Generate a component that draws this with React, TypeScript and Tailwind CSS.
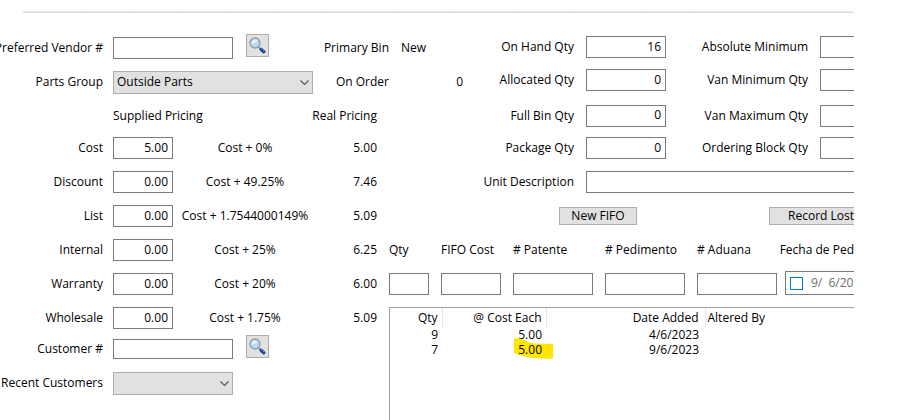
import type { ReactNode } from "react";

// ============================================================
// Data
// ============================================================

const pricing = [
  { id: "cost", label: "Cost", supplied: "5.00", formula: "Cost + 0%", real: "5.00" },
  { id: "discount", label: "Discount", supplied: "0.00", formula: "Cost + 49.25%", real: "7.46" },
  { id: "list", label: "List", supplied: "0.00", formula: "Cost + 1.7544000149%", real: "5.09" },
  { id: "internal", label: "Internal", supplied: "0.00", formula: "Cost + 25%", real: "6.25" },
  { id: "warranty", label: "Warranty", supplied: "0.00", formula: "Cost + 20%", real: "6.00" },
  { id: "wholesale", label: "Wholesale", supplied: "0.00", formula: "Cost + 1.75%", real: "5.09" },
];

const quantities = [
  { id: "on-hand", label: "On Hand Qty", value: "16", limitId: "abs-min", limit: "Absolute Minimum", row: "h-8" },
  { id: "allocated", label: "Allocated Qty", value: "0", limitId: "van-min", limit: "Van Minimum Qty", row: "h-[34px]" },
  { id: "full-bin", label: "Full Bin Qty", value: "0", limitId: "van-max", limit: "Van Maximum Qty", row: "h-9 pt-px" },
  { id: "package", label: "Package Qty", value: "0", limitId: "block", limit: "Ordering Block Qty", row: "h-[30px]" },
];

const fifoFields = [
  { id: "fifo-qty", label: "Qty", width: "w-10" },
  { id: "fifo-cost", label: "FIFO Cost", width: "w-[60px]" },
  { id: "patente", label: "# Patente", width: "w-20" },
  { id: "pedimento", label: "# Pedimento", width: "w-20" },
  { id: "aduana", label: "# Aduana", width: "w-20" },
];

const layers = [
  { qty: "9", cost: "5.00", date: "4/6/2023", marked: false },
  { qty: "7", cost: "5.00", date: "9/6/2023", marked: true },
];

const field = "h-[22px] border border-[#7a7a7a] bg-white pb-0.5 outline-none";

// ============================================================
// Small pieces
// ============================================================

function Label({ htmlFor, children }: { htmlFor?: string; children: ReactNode }) {
  return (
    <div className="flex w-[103px] shrink-0 justify-end">
      <label htmlFor={htmlFor}>{children}</label>
    </div>
  );
}

function LookupButton({ label }: { label: string }) {
  return (
    <div className="flex h-full items-center pb-[5px] pl-[3px]">
      <button
        type="button"
        aria-label={label}
        className="flex size-[23px] items-center justify-center border border-[#adadad] bg-[#e1e1e1]"
      >
        <svg width="17" height="17" viewBox="0 0 17 17" fill="none">
          <path d="M9.5 10l2 1.800" stroke="#8a8f96" strokeWidth="1.4" />
          <path d="M12 12.300l2.800 2.500" stroke="#17408f" strokeWidth="3.2" strokeLinecap="round" />
          <path d="M12 11.600l3.200 2.600" stroke="#5c94e4" strokeWidth="1.1" strokeDasharray="1.5 1" />
          <circle cx="6" cy="6" r="5" fill="#b4dbf8" stroke="#939ca6" strokeWidth="1.3" />
          <path d="M2.800 6.500a3.400 3.400 0 0 1 5.400-3.300C8 5.200 5.600 6.700 2.800 6.500z" fill="#e4f4ff" />
        </svg>
      </button>
    </div>
  );
}

function Dropdown({ id, width, children }: { id: string; width: string; children?: ReactNode }) {
  return (
    <div className={`relative ${width}`}>
      <select
        id={id}
        className="block h-[23px] w-full appearance-none border border-[#adadad] bg-[#e1e1e1] pl-[3px] outline-none"
      >
        {children}
      </select>
      <svg
        className="pointer-events-none absolute top-2 right-1"
        width="9"
        height="7"
        viewBox="0 0 9 7"
        fill="none"
      >
        <path d="M0.500 1.500L4.500 5.500L8.500 1.500" stroke="#555" strokeWidth="1.100" />
      </svg>
    </div>
  );
}

// ============================================================
// Pricing column
// ============================================================

function PricingColumn() {
  return (
    <section className="w-[389px] shrink-0">
      <div className="flex h-[34px] items-center gap-2.5">
        <Label htmlFor="vendor">Preferred Vendor #</Label>
        <input id="vendor" className={`${field} w-[120px]`} />
        <LookupButton label="Find vendor" />
        <span className="flex-1 text-right">Primary Bin</span>
      </div>
      <div className="flex h-[34px] items-center gap-2.5">
        <Label htmlFor="group">Parts Group</Label>
        <Dropdown id="group" width="w-[200px]">
          <option>Outside Parts</option>
        </Dropdown>
        <span className="flex-1 text-right">On Order</span>
      </div>
      <div className="flex h-8 items-center justify-between pt-0.5 pr-3 pl-[113px]">
        <span>Supplied Pricing</span>
        <span>Real Pricing</span>
      </div>
      {pricing.map((p) => (
        <div key={p.id} className="flex h-[34px] items-center pr-3">
          <Label htmlFor={p.id}>{p.label}</Label>
          <input
            id={p.id}
            defaultValue={p.supplied}
            className={`${field} ml-2.5 w-[60px] pr-1 text-right`}
          />
          <span className="w-36 text-center">{p.formula}</span>
          <span className="flex-1 text-right">{p.real}</span>
        </div>
      ))}
      <div className="flex h-7 items-center gap-2.5">
        <Label htmlFor="customer">Customer #</Label>
        <input
          id="customer"
          className="h-5 w-[120px] border border-[#7a7a7a] bg-white outline-none"
        />
        <LookupButton label="Find customer" />
      </div>
      <div className="flex h-10 items-center gap-2.5">
        <Label htmlFor="recent">Recent Customers</Label>
        <Dropdown id="recent" width="w-[120px]" />
      </div>
    </section>
  );
}

// ============================================================
// Stock quantities
// ============================================================

function StockPanel() {
  return (
    <section className="flex">
      <div className="w-[74px] shrink-0">
        <div className="flex h-[34px] items-center pl-3">New</div>
        <div className="flex h-[34px] items-center justify-end">0</div>
      </div>
      <div className="min-w-0 flex-1">
        {quantities.map((q) => (
          <div key={q.id} className={`flex items-center ${q.row}`}>
            <label htmlFor={q.id} className="w-[111px] shrink-0 text-right">
              {q.label}
            </label>
            <input
              id={q.id}
              defaultValue={q.value}
              className={`${field} ml-3 w-20 shrink-0 pr-1 text-right`}
            />
            <label htmlFor={q.limitId} className="w-[142px] shrink-0 text-right">
              {q.limit}
            </label>
            <input id={q.limitId} className={`${field} ml-3 min-w-0 flex-1 border-r-0`} />
          </div>
        ))}
        <div className="flex h-[38px] items-center gap-3">
          <label htmlFor="unit" className="w-[111px] shrink-0 text-right">
            Unit Description
          </label>
          <input id="unit" className={`${field} min-w-0 flex-1 border-r-0`} />
        </div>
      </div>
    </section>
  );
}

// ============================================================
// FIFO entry and history
// ============================================================

function FifoEntry() {
  return (
    <section>
      <div className="flex h-[30px] items-center justify-between pl-[170px]">
        <button
          type="button"
          className="h-[18px] w-[78px] border border-[#adadad] bg-[#e1e1e1] leading-4"
        >
          New FIFO
        </button>
        <button
          type="button"
          className="h-[18px] w-[85px] border border-r-0 border-[#adadad] bg-[#e1e1e1] text-right leading-4"
        >
          Record Lost
        </button>
      </div>
      <div className="flex gap-2">
        <div className="flex gap-3">
          {fifoFields.map((f) => (
            <div key={f.id} className={`${f.width} shrink-0`}>
              <label htmlFor={f.id} className="flex h-[38px] items-center">
                {f.label}
              </label>
              <div className="flex h-[30px] items-center">
                <input id={f.id} className={`${field} w-full`} />
              </div>
            </div>
          ))}
        </div>
        <div className="min-w-0 flex-1">
          <label htmlFor="fecha" className="flex h-[38px] items-center justify-end">
            Fecha de Ped
          </label>
          <div className="flex h-[30px] items-center pb-0.5">
            <div className="flex h-6 w-full items-center gap-2 overflow-hidden border border-r-0 border-[#7a7a7a] pl-1">
              <input
                id="fecha"
                type="checkbox"
                className="size-[13px] shrink-0 appearance-none border border-[#0078d7] bg-white"
              />
              <span className="whitespace-pre text-[#6d6d6d]">9/  6/2023</span>
            </div>
          </div>
        </div>
      </div>
    </section>
  );
}

function Highlight() {
  return (
    <svg
      className="absolute -top-1 -left-1 -z-10"
      width="39"
      height="21"
      viewBox="0 0 39 21"
      fill="#ffe600"
    >
      <path d="M0 0.500C4 -0.200 8 0.500 11 2.500C15 5 20 5.500 25 5.500L38 6Q39 6 39 7V20.500Q30 21 20 20Q8 19 0 15Z" />
    </svg>
  );
}

function FifoHistory() {
  return (
    <section className="mt-2 flex-1 border-t border-l border-[#a0a0a0]">
      <table className="w-full table-fixed border-collapse">
        <thead>
          <tr className="h-[19px]">
            <th className="w-[52px] border-r border-[#e5e5e5] pr-1 text-right font-normal">Qty</th>
            <th className="w-[104px] border-r border-[#e5e5e5] pr-1 text-right font-normal">
              @ Cost Each
            </th>
            <th className="w-[159px] border-r border-[#e5e5e5] pr-1.5 text-right font-normal">
              Date Added
            </th>
            <th className="pl-0.5 text-left font-normal">Altered By</th>
          </tr>
        </thead>
        <tbody className="leading-[15px]">
          {layers.map((l) => (
            <tr key={l.date}>
              <td className="pr-1 text-right">{l.qty}</td>
              <td className="pr-1 text-right">
                <span className="relative isolate inline-block">
                  {l.marked && <Highlight />}
                  {l.cost}
                </span>
              </td>
              <td className="pr-1.5 text-right">{l.date}</td>
              <td />
            </tr>
          ))}
        </tbody>
      </table>
    </section>
  );
}

// ============================================================
// Header rule, with the tab separators ending on it
// ============================================================

const tabWidths = ["w-[58px]", "w-12", "w-12", "w-[52px]", "w-12", "w-[50px]", "w-[71px]", "w-[55px]", "w-[60px]", "w-[57px]", "w-[73px]", "w-[47px]"];

function HeaderRule() {
  return (
    <div className="ml-[23px] flex h-[2px] border-b border-[#d9d9d9] bg-[#f0f0f0]">
      {tabWidths.map((w, i) => (
        <div key={i} className={`${w} shrink-0 border-r border-[#d9d9d9]`} />
      ))}
    </div>
  );
}

export default function App() {
  return (
    <main className="min-h-screen bg-white pr-[43px] font-['Open_Sans','Noto_Sans',sans-serif] text-[12px] leading-4 whitespace-nowrap text-black">
      <div className="flex min-h-screen flex-col overflow-hidden pt-[11px]">
        <HeaderRule />
        <form className="flex flex-1 pt-[18px]">
          <PricingColumn />
          <div className="flex min-w-0 flex-1 flex-col">
            <StockPanel />
            <FifoEntry />
            <FifoHistory />
          </div>
        </form>
      </div>
    </main>
  );
}
